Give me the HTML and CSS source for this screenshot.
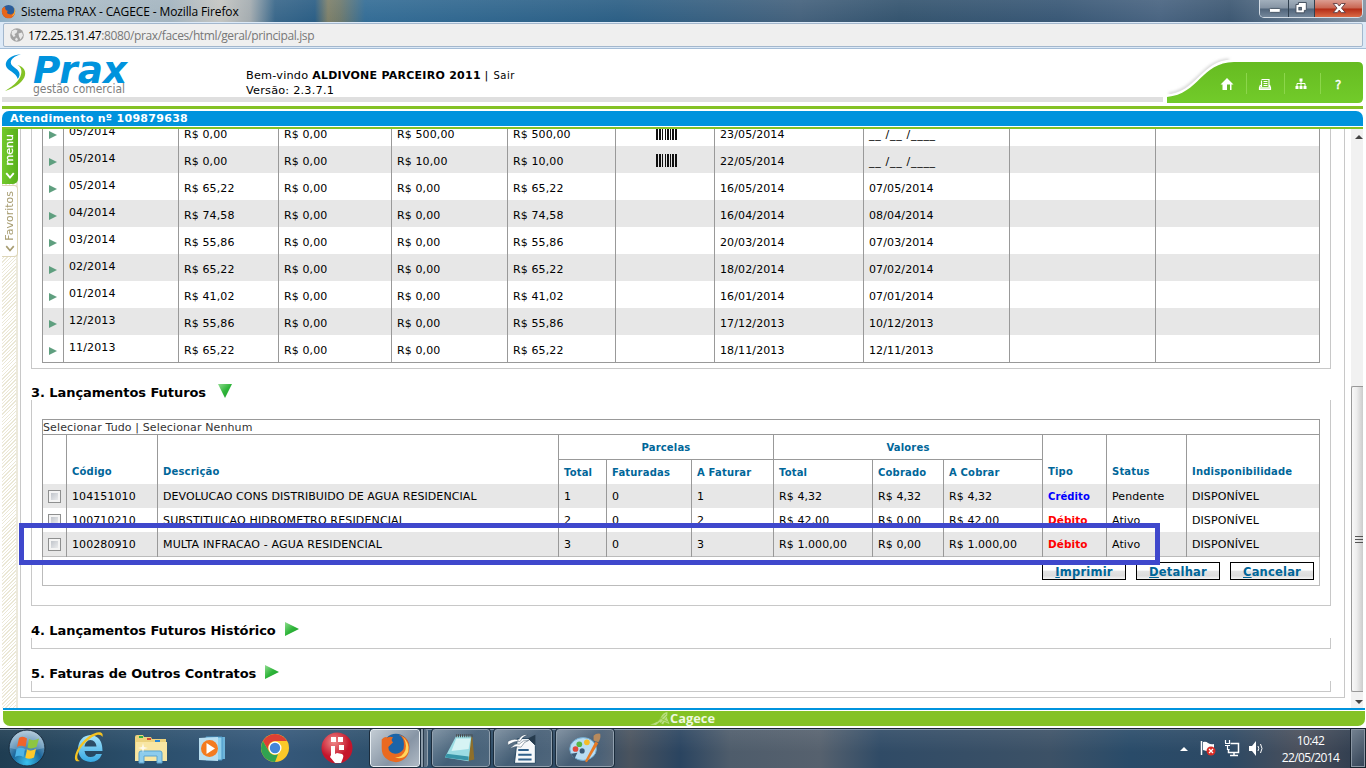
FILE: index.html
```html
<!DOCTYPE html>
<html lang="pt-BR">
<head>
<meta charset="utf-8">
<title>Sistema PRAX - CAGECE</title>
<link rel="stylesheet" href="styles.css">
</head>
<body>
<div class="titlebar">
  <svg class="fx-mini" viewBox="0 0 16 16"><circle cx="8" cy="8" r="7" fill="#2a5c9a"/><path d="M1 5C0 12 4 15.500 8.500 15.300C13 15 15.700 11 15 6C14 10 11.500 11.500 9 11C6 10.500 6 8 7.500 7.500C5 7 4 5 4.500 3C3 3 2.500 4 1 5Z" fill="#e8661b"/><path d="M13 3C15 6 15 10 11.500 13C15 12 16.500 7 13 3Z" fill="#ffc63b"/></svg>
  <span class="wintitle">Sistema PRAX - CAGECE - Mozilla Firefox</span>
  <div class="winctl">
    <div class="wc"><svg viewBox="0 0 28 17"><rect x="9.500" y="8.500" width="11" height="4" rx="1" fill="#fff" stroke="#4a5868"/></svg></div>
    <div class="wc"><svg viewBox="0 0 26 17"><path d="M9.500 2.500h8v8h-2v2.500h-8.500v-8.500h2.500z" fill="#fff" stroke="#44505f"/><rect x="10" y="7.500" width="2.500" height="2.500" fill="#66788b" stroke="#44505f"/></svg></div>
    <div class="wc close"><svg viewBox="0 0 46 17"><path d="M18 3.500h4l2 2.500 2-2.500h4l-3.800 4.500 3.800 4.500h-4l-2-2.500-2 2.500h-4l3.800-4.500z" fill="#fff" stroke="#5e3b40" stroke-width=".9"/></svg></div>
  </div>
</div>
<div class="urlbar"><div class="urlbox">
  <svg class="globe" viewBox="0 0 14 14"><circle cx="7" cy="7" r="6.800" fill="#a3a3a3"/><path d="M2 3L5 1.500 7.500 2.500 6.500 5 4.500 6 5.500 8 3.500 9 1.500 6ZM8.500 5.500L12 4.500 13 7.500 10.500 11.500 9 8.500ZM6 9.500L8 11 7 13 5 12Z" fill="#e9e9e9"/></svg>
  <span class="url"><b>172.25.131.47</b>:8080/prax/faces/html/geral/principal.jsp</span>
</div></div>

<header class="head">
  <div class="head-main">
    <svg class="logo" viewBox="0 0 132 48">
      <path d="M21 5.300C11 6 4.500 11.500 6 17C7.500 22 16 23 17.800 30C21.500 25 19 21.500 14.500 18.500C8 14.500 10 8.500 21 5.300Z" fill="#0093dd"/>
      <path d="M17.500 16C23 19 22.500 26 17.500 32C14 36.500 9.500 39 5 42C13 39.500 21 35 24.300 28.500C27 22.500 23.500 17.500 17.500 16Z" fill="#84c225"/>
      <text x="33" y="34" class="brand" textLength="94" lengthAdjust="spacingAndGlyphs">Prax</text>
      <text x="33" y="44" class="tagline" textLength="92" lengthAdjust="spacingAndGlyphs">gestão comercial</text>
    </svg>
    <div class="welcome"><div>Bem-vindo <b>ALDIVONE PARCEIRO 2011</b> | <small>Sair</small></div><div>Versão: 2.3.7.1</div></div>
    <svg class="tools" viewBox="0 0 200 47">
      <defs><linearGradient id="tg" x1="0" y1="0" x2="0" y2="1"><stop offset="0" stop-color="#66bb21"/><stop offset="1" stop-color="#72cb2a"/></linearGradient><filter id="soft" x="-20%" y="-20%" width="140%" height="140%"><feGaussianBlur stdDeviation="1.500"/></filter></defs>
      <path d="M6 38C34 34 40 5 66 4" fill="none" stroke="#ccc" stroke-width="2.500" filter="url(#soft)"/>
      <path d="M3 40C36 38 38 6 69 5H100" fill="none" stroke="#fff" stroke-width="3"/>
      <path d="M4 41C36 38 38 6.500 71 6H195Q200 6 200 11V42Q200 47 195 47H4Z" fill="url(#tg)"/>
      <path d="M83.500 17V38M121.500 17V38M157.500 17V38" stroke="#8cd64b"/>
      <path d="M64 22L70.500 28.500H68.500V34H59.500V28.500H57.500Z" fill="#fff"/><path d="M64 28.500h3V34h-3z" fill="#67b928"/>
      <g stroke="#fff" fill="none"><path d="M98.500 24.500V31M98.500 23.500h7.500v7.500M100.500 25.500h4M100.500 27.500h4M100.500 29.500h4M97.500 29l-1 2.500v2h11v-2l-1-2.500" stroke-width="1.200"/><path d="M96.500 32h11" stroke-width="1.500"/></g>
      <path d="M136.500 22.500h3v3h-3zM132.500 30h3v3h-3zM136.500 30h3v3h-3zM140.500 30h3v3h-3z" fill="#fff"/><path d="M138 25V30M134 30V27.500H142V30" fill="none" stroke="#fff"/>
      <text x="172" y="33" class="help">?</text>
    </svg>
  </div>
  <div class="greyline"></div>
  <div class="greenline"></div>
  <div class="bluebar">Atendimento nº 109879638</div>
  <div class="greenline thin"></div>
</header>

<main class="main">
  <aside class="side">
    <div class="tab tab-menu"><span>menu</span><svg viewBox="0 0 8 8"><path d="M1 2.500L4 6 7 2.500" fill="none" stroke="#fff" stroke-width="1.500"/></svg></div>
    <div class="tab tab-fav"><span>Favoritos</span><svg viewBox="0 0 8 8"><path d="M1 2.500L4 6 7 2.500" fill="none" stroke="#a79c70" stroke-width="1.300"/></svg></div>
  </aside>
  <div class="content">
    <section class="panel first">
      <div class="bills">
        <div class="brow"><i></i><span>05/2014</span><span>R$ 0,00</span><span>R$ 0,00</span><span>R$ 500,00</span><span>R$ 500,00</span><em><svg class="bar" viewBox="0 0 21 13"><use href="#bars"/></svg></em><span>23/05/2014</span><span class="blank">__ /__ /____</span><span></span><span></span></div>
        <div class="brow"><i></i><span>05/2014</span><span>R$ 0,00</span><span>R$ 0,00</span><span>R$ 10,00</span><span>R$ 10,00</span><em><svg class="bar" viewBox="0 0 21 13"><g id="bars" fill="#111"><path d="M0 0h2v13h-2zM3 0h2v13h-2zM6 0h1v13h-1zM9 0h1v13h-1zM11 0h2v13h-2zM14 0h1v13h-1zM16 0h2v13h-2zM19 0h2v13h-2z"/></g></svg></em><span>22/05/2014</span><span class="blank">__ /__ /____</span><span></span><span></span></div>
        <div class="brow"><i></i><span>05/2014</span><span>R$ 65,22</span><span>R$ 0,00</span><span>R$ 0,00</span><span>R$ 65,22</span><em></em><span>16/05/2014</span><span>07/05/2014</span><span></span><span></span></div>
        <div class="brow"><i></i><span>04/2014</span><span>R$ 74,58</span><span>R$ 0,00</span><span>R$ 0,00</span><span>R$ 74,58</span><em></em><span>16/04/2014</span><span>08/04/2014</span><span></span><span></span></div>
        <div class="brow"><i></i><span>03/2014</span><span>R$ 55,86</span><span>R$ 0,00</span><span>R$ 0,00</span><span>R$ 55,86</span><em></em><span>20/03/2014</span><span>07/03/2014</span><span></span><span></span></div>
        <div class="brow"><i></i><span>02/2014</span><span>R$ 65,22</span><span>R$ 0,00</span><span>R$ 0,00</span><span>R$ 65,22</span><em></em><span>18/02/2014</span><span>07/02/2014</span><span></span><span></span></div>
        <div class="brow"><i></i><span>01/2014</span><span>R$ 41,02</span><span>R$ 0,00</span><span>R$ 0,00</span><span>R$ 41,02</span><em></em><span>16/01/2014</span><span>07/01/2014</span><span></span><span></span></div>
        <div class="brow"><i></i><span>12/2013</span><span>R$ 55,86</span><span>R$ 0,00</span><span>R$ 0,00</span><span>R$ 55,86</span><em></em><span>17/12/2013</span><span>10/12/2013</span><span></span><span></span></div>
        <div class="brow"><i></i><span>11/2013</span><span>R$ 65,22</span><span>R$ 0,00</span><span>R$ 0,00</span><span>R$ 65,22</span><em></em><span>18/11/2013</span><span>12/11/2013</span><span></span><span></span></div>
      </div>
    </section>
    <h2 class="h3"><span>3. Lançamentos Futuros</span><svg class="tri" viewBox="0 0 14 14"><defs><linearGradient id="gr" x1="0" y1="0" x2="1" y2="1"><stop offset="0" stop-color="#8fdc8f"/><stop offset=".5" stop-color="#2fb53a"/><stop offset="1" stop-color="#1d9a2a"/></linearGradient></defs><path d="M0 0H14L7 14Z" fill="url(#gr)"/></svg></h2>
    <section class="panel second">
      <div class="launch">
        <div class="sel">Selecionar Tudo | Selecionar Nenhum</div>
        <div class="lhead lgrid">
          <div class="tall">&nbsp;</div><div class="tall">Código</div><div class="tall">Descrição</div>
          <div class="grp g1">Parcelas</div><div class="grp g2">Valores</div>
          <div class="tall t10">Tipo</div><div class="tall t11">Status</div><div class="tall t12">Indisponibilidade</div>
          <div class="sub s1">Total</div><div class="sub">Faturadas</div><div class="sub">A Faturar</div><div class="sub">Total</div><div class="sub">Cobrado</div><div class="sub">A Cobrar</div>
        </div>
        <div class="lrow lgrid"><span><b class="ck"></b></span><span>104151010</span><span>DEVOLUCAO CONS DISTRIBUIDO DE AGUA RESIDENCIAL</span><span>1</span><span>0</span><span>1</span><span>R$ 4,32</span><span>R$ 4,32</span><span>R$ 4,32</span><span class="cred">Crédito</span><span>Pendente</span><span>DISPONÍVEL</span></div>
        <div class="lrow lgrid"><span><b class="ck"></b></span><span>100710210</span><span class="subst">SUBSTITUICAO HIDROMETRO RESIDENCIAL</span><span>2</span><span>0</span><span>2</span><span>R$ 42,00</span><span>R$ 0,00</span><span>R$ 42,00</span><span class="deb">Débito</span><span>Ativo</span><span>DISPONÍVEL</span></div>
        <div class="lrow lgrid"><span><b class="ck"></b></span><span>100280910</span><span class="subst">MULTA INFRACAO - AGUA RESIDENCIAL</span><span>3</span><span>0</span><span>3</span><span>R$ 1.000,00</span><span>R$ 0,00</span><span>R$ 1.000,00</span><span class="deb">Débito</span><span>Ativo</span><span>DISPONÍVEL</span></div>
        <div class="foot"><button><u>I</u>mprimir</button><button><u>D</u>etalhar</button><button><u>C</u>ancelar</button></div>
      </div>
    </section>
    <h2 class="h4"><span>4. Lançamentos Futuros Histórico</span><svg class="tri" viewBox="0 0 14 14"><path d="M0 0L14 7 0 14Z" fill="url(#gr)"/></svg></h2>
    <section class="panel empty"></section>
    <h2 class="h5"><span>5. Faturas de Outros Contratos</span><svg class="tri" viewBox="0 0 14 14"><path d="M0 0L14 7 0 14Z" fill="url(#gr)"/></svg></h2>
    <section class="panel empty"></section>
    <div class="highlight"></div>
  </div>
  <div class="scroll">
    <div class="sbtn"><svg viewBox="0 0 12 16"><path d="M4 10h8L8 6z" fill="#444"/></svg></div>
    <div class="gap"></div>
    <div class="thumb"><svg viewBox="0 0 8 9"><path d="M0 1.500h8M0 4.500h8M0 7.500h8" stroke="#555"/></svg></div>
    <div class="sbtn end"><svg viewBox="0 0 12 14"><path d="M4 8h8L8 12z" fill="#444"/></svg></div>
  </div>
</main>

<footer class="pagefoot"><div class="blueline"></div><div class="greenfoot">
  <svg viewBox="0 0 70 15"><path d="M0 13.500Q8 12 11 6Q13 1.500 17.500 1L17 7 19.500 13 14.500 11 13 13.500 9.500 11 6 14Z" fill="#b9de80"/><path d="M7 11L16 3M11 12L17 5M10 7L18 11" stroke="#84c225" stroke-width=".7"/><text x="20" y="12" class="cag" textLength="45" lengthAdjust="spacingAndGlyphs">Cagece</text></svg>
</div></footer>

<div class="taskbar">
  <svg class="ic" viewBox="0 0 54 40"><defs><radialGradient id="orb" cx=".5" cy=".9" r=".9"><stop offset="0" stop-color="#38c3f0"/><stop offset=".45" stop-color="#1c679c"/><stop offset="1" stop-color="#a9c2d4"/></radialGradient></defs><circle cx="27" cy="19" r="18" fill="url(#orb)" stroke="#1a2c3c"/><path d="M10 19A17 17 0 0 1 44 19Q27 24 10 19Z" fill="#fff" opacity=".22"/><path d="M19 9Q23 6.500 27 9.500L25.500 18Q21 15.500 17 18Z" fill="#f0642a"/><path d="M29 10Q33 12.500 39 9.500L36.500 18Q31 20.500 27.500 18.500Z" fill="#8dc642"/><path d="M16.500 20Q21 17.500 25 20L23.500 28Q19 25.500 15 28Z" fill="#4cb4e8"/><path d="M27 20.500Q31 22.500 36 20L34 28.500Q29 31 25.300 28.700Z" fill="#fdc92c"/></svg>
  <svg class="ic w70" viewBox="54 0 70 40"><defs><linearGradient id="ie" x1="0" y1="0" x2="0" y2="1"><stop offset="0" stop-color="#a7e4fb"/><stop offset="1" stop-color="#35a9e4"/></linearGradient></defs><path d="M102.500 22H84.500Q85.500 28 90.500 28Q95 28 96 25H102Q99 33 90.500 33Q78.500 32 78 19.500Q79 7 90.500 6Q102.500 7 102.500 22ZM96.500 17.500Q95.500 11 90.500 11Q85.500 11.500 84.500 17.500Z" fill="url(#ie)"/><path d="M80 32C70 35 76 17 88 8C97 1.500 104 2 102.500 8C100 3.500 94 6 87 12C79 19 74 30 80 32Z" fill="#f5c321"/></svg>
  <svg class="ic w62" viewBox="124 0 62 40"><path d="M135 8Q135 6 137 6H143L144 8H151L152 10H166V32H135Z" fill="#ecd27d"/><path d="M136 13H167V32H135Z" fill="#f8e6a3"/><path d="M139 7h4v2h-4z" fill="#2eae46"/><path d="M147 9h4v2h-4z" fill="#d44735"/><path d="M155 11h5v2h-5z" fill="#2a86d2"/><path d="M139 34V24Q139 22 141 22H160Q162 22 162 24V34H157V27H144V34Z" fill="#8dcced" stroke="#5aa3cf"/><path d="M143 14l1 4 4 1-4 1-1 4-1-4-4-1 4-1z" fill="#fff" opacity=".8"/></svg>
  <svg class="ic w62" viewBox="186 0 62 40"><path d="M206 8H225V30H206Z" fill="#6db4da"/><path d="M206 8H222V31H206Z" fill="#8fd0ec" stroke="#4a97c7"/><path d="M199 9L218 8V32L199 31Z" fill="#b9def0"/><circle cx="209.500" cy="19.500" r="8.500" fill="#f47b20"/><path d="M206.500 14L215 19.500 206.500 25Z" fill="#fff"/></svg>
  <svg class="ic w62" viewBox="248 0 62 40"><circle cx="275" cy="19" r="14" fill="#fcc929"/><path d="M262.900 12A14 14 0 0 1 287.100 12H275A7 7 0 0 0 269 22.500Z" fill="#de4034"/><path d="M262.900 12L269 22.500A7 7 0 0 0 278 25.300L275 33A14 14 0 0 1 262.900 12Z" fill="#31a350"/><circle cx="275" cy="19" r="6.500" fill="#fff"/><circle cx="275" cy="19" r="5.200" fill="#4286d8"/></svg>
  <svg class="ic w60" viewBox="310 0 60 40"><defs><radialGradient id="rd" cx=".4" cy=".3"><stop offset="0" stop-color="#f08a8a"/><stop offset="1" stop-color="#c5152b"/></radialGradient></defs><circle cx="337" cy="19" r="15.500" fill="url(#rd)"/><path d="M331 8h5v5h-5zM338 8h5v5h-5zM339 16h5v5h-5zM331 17h4v8l2-1 5 1q2 1 1 4l-2 5h-6l-5-6 1-2z" fill="#fff"/></svg>
  <div class="tb act"><svg viewBox="0 0 50 40"><circle cx="26" cy="18" r="14" fill="#1c64a8"/><path d="M11 10Q14 6 17 8Q20 6 23 8Q20 11 23 13L18 18Q18 24 25 25Q31 25 34 20Q36 8 29 5Q41 8 40 20Q39 32 26 34Q11 32 11 19Z" fill="#ea6a20"/><path d="M32 6Q38 12 36 21Q33 29 25 29Q35 32 39 23Q41 13 32 6Z" fill="#ffd65c"/></svg></div><div class="stack"></div>
  <div class="tb"><svg viewBox="0 0 58 40"><path d="M24 6L41 7L43 31L35 33Z" fill="#8e6f2b"/><path d="M24 6H40L37 33L12 29Z" fill="#9bdce3"/><path d="M24 9H39L37 20L19 22Z" fill="#d6f3f4"/><path d="M14 25L37 28V32L12 29Z" fill="#3795a8"/><path d="M24 6H42" stroke="#444" stroke-width="3" stroke-dasharray="1 1"/></svg></div>
  <div class="tb"><svg viewBox="0 0 58 40"><path d="M23 9H35L42 16V35H20Z" fill="#f5f8fa" stroke="#24445f"/><path d="M34 9L42 16V5Z" fill="#263b4d"/><path d="M24 21H35M24 26H38M24 31H38" stroke="#2f608b" stroke-width="2"/><path d="M13 12Q21 8 24 11Q27 4 34 5Q28 7 26 12Q20 11 13 16ZM15 20Q21 13 25 15Q29 10 35 11Q30 12 27 18Q20 16 15 20Z" fill="#fff" stroke="#334b60" stroke-width=".5"/></svg></div>
  <div class="tb"><svg viewBox="0 0 58 40"><ellipse cx="27" cy="20" rx="14" ry="12" fill="#b9ddf3" stroke="#6fabd1"/><path d="M14 25l7-1-3 6z" fill="#3d5a76"/><circle cx="26" cy="22" r="2.700" fill="#3b5a77"/><circle cx="19" cy="20" r="3" fill="#df493b"/><circle cx="23" cy="15" r="3" fill="#57b544"/><circle cx="31" cy="13" r="3" fill="#f6bd28"/><path d="M40 12L43 14 31 34 29 33Z" fill="#e77a25"/><path d="M38 6Q41 3 45 4Q46 9 43 13L38 11Z" fill="#b78a5d"/></svg></div>
  <div class="tray">
    <svg viewBox="1176 0 94 40"><path d="M1180 22h8l-4-4z" fill="#fff"/>
    <path d="M1201.500 12V26" stroke="#fff" stroke-width="1.500"/><path d="M1203 13Q1206 12 1208 14Q1211 16 1214 15V23Q1208 23 1203 21Z" fill="#fff"/><circle cx="1211" cy="22" r="4.500" fill="#d92c25"/><path d="M1209 20l4 4m0-4l-4 4" stroke="#fff" stroke-width="1.300"/>
    <path d="M1230.500 14.500H1238.500V23.500H1228.500V20M1230 26.500h8M1234 24v2" fill="none" stroke="#fff" stroke-width="1.500"/><path d="M1225.500 11v3M1229.500 11v3M1225 14.500h5M1225 16.500h5M1227.500 16v4.500h2" fill="none" stroke="#fff" stroke-width="1.200"/>
    <path d="M1249 17h3l4-5v15l-4-5h-3z" fill="#fff"/><path d="M1258 17q1.500 2.500 0 5M1260.500 15q3 4.500 0 9" fill="none" stroke="#fff"/></svg>
    <div class="clock"><span>10:42</span><span>22/05/2014</span></div>
    <div class="peek"></div>
  </div>
</div>
</body>
</html>
```
FILE: styles.css
```css
* { box-sizing: border-box; }
body { margin: 0; width: 1366px; height: 768px; overflow: hidden; display: flex; flex-direction: column; background: #fff; color: #000; font: 11px "DejaVu Sans", sans-serif; }
svg { display: block; }

/* browser window */
.titlebar { height: 22px; display: flex; align-items: center; padding-right: 3px; background: linear-gradient(rgba(255,255,255,.08), transparent), linear-gradient(90deg, #8fb0c8 0, #aebfca 30px, #a3b4bf 170px, #c4c5c2 220px, #a4acb0 250px, #39678a 275px, #2b5e85 315px, #7e8069 328px, #6f7a6d 340px, #346d96 365px, #2c5f85 620px, #44617c 800px, #34546f 900px, #395876 1060px, #496481 1160px, #3d5873 1230px, #8494a4 1366px); }
.fx-mini { width: 15px; height: 15px; margin: 0 5px 0 1px; }
.wintitle { font: 12px "Open Sans", sans-serif; flex: 1; letter-spacing: -.12px; }
.winctl { display: flex; align-self: flex-start; height: 18px; width: 104px; border: 1px solid #d3dce5; border-top: 0; border-radius: 0 0 5px 5px; overflow: hidden; }
.wc { width: 29px; background: linear-gradient(#a2afbc 0, #8493a3 48%, #50647a 52%, #74879b); border-right: 1px solid #30404f; }
.wc:nth-child(2) { width: 27px; }
.wc.close { width: 47px; border: 0; background: linear-gradient(#dc9d91 0, #c96551 48%, #b32c16 52%, #da6a45); }
.urlbar { height: 27px; padding: 1px 3px 0; background: #dce9f7; border-bottom: 1px solid #a5bdd6; }
.urlbox { height: 24px; display: flex; align-items: center; gap: 4px; padding-left: 6px; border: 1px solid #a3b7cd; border-radius: 2px; background: #efefef; }
.globe { width: 14px; height: 14px; }
.url { font: 12px "Open Sans", sans-serif; letter-spacing: -.37px; color: #777; }
.url b { font-weight: 400; color: #000; }

/* application header */
.head { height: 80px; padding: 0 3px 0 2px; }
.head-main { height: 48px; display: flex; }
.logo { width: 132px; height: 48px; margin-left: -2px; overflow: visible; }
.brand { font: italic bold 37px "DejaVu Sans", sans-serif; fill: #0093dd; }
.tagline { font: 12px "DejaVu Sans", sans-serif; fill: #808080; }
.welcome { margin: 19px auto 0 114px; line-height: 15px; font-size: 11.300px; letter-spacing: .2px; }
.welcome b { font-size: 11px; letter-spacing: .26px; }
.welcome small { font-size: 10px; letter-spacing: .5px; margin-left: 1px; }
.tools { width: 200px; height: 47px; margin-top: 7px; flex: none; }
.help { font: 12px "DejaVu Sans", sans-serif; fill: #fff; stroke: #fff; stroke-width: .4px; }
.greyline { height: 5px; width: 1161px; background: #dfdfdf; }
.greenline { height: 3px; margin-top: 4px; background: #84c225; }
.bluebar { height: 15px; margin-top: 2px; padding-left: 8px; border-radius: 7px 7px 0 0; background: #0093dd; color: #fff; font-weight: bold; line-height: 16px; letter-spacing: .3px; }
.greenline.thin { height: 2px; margin-top: 1px; }

/* body */
.main { height: 579px; display: flex; overflow: hidden; }
.side { width: 16px; margin: 0 2px; border-right: 2px solid #ece9dc; background: repeating-linear-gradient(135deg, #fff 0 1.500px, #ebe8d6 1.500px 2.500px); }
.tab { width: 16px; display: flex; flex-direction: column; align-items: center; justify-content: space-between; }
.tab span { writing-mode: vertical-rl; transform: rotate(180deg); line-height: 14px; }
.tab svg { width: 10px; height: 10px; }
.tab-menu { height: 55px; padding: 5px 0 4px; background: linear-gradient(90deg, #72c92b, #58b01b); border-radius: 0 0 5px 0; color: #fff; }
.tab-menu span { -webkit-text-stroke: .3px #fff; }
.tab-fav { height: 72px; margin-top: 1px; padding: 5px 0 3px; background: #fff; border: 1px solid #ddd5b8; border-left: 0; border-radius: 0 4px 4px 0; color: #a79c70; }
.content { position: relative; width: 1325px; height: 569px; border: 1px solid #c8c8c8; border-top: 0; padding: 0 13px 0 10px; }
.panel { width: 1300px; border: 1px solid #c8c8c8; border-top: 0; }
.first { height: 240px; padding: 0 10px; overflow: hidden; }
.bills { margin-top: -10px; border-bottom: 1px solid #999; }
.brow { height: 27px; display: grid; grid-template-columns: 21px 115px 100px 113px 116px 108px 99px 149px 146px 146px 165px; line-height: 31px; letter-spacing: .12px; overflow: hidden; }
.brow:nth-child(even), .lrow:nth-child(odd) { background: #e7e7e7; }
.brow > * { border-left: 1px solid #999; padding-left: 5px; height: 27px; white-space: nowrap; }
.brow > :last-child, .lrow > :last-child, .lhead > .t12 { border-right: 1px solid #999; }
.brow > :nth-child(2) { line-height: 25px; }
.brow > .blank { letter-spacing: .7px; }
.brow i::before { content: ""; display: block; margin: 12px 0 0 1px; width: 0; border-left: 8px solid #5f9f7f; border-top: 4px solid transparent; border-bottom: 4px solid transparent; }
.brow em { padding: 8px 0 0 40px; }
.bar { width: 21px; height: 13px; }
h2 { margin: 0; font-size: 13px; line-height: 17px; letter-spacing: -.06px; display: flex; }
.h3 { height: 31px; padding-top: 15px; }
.h4, .h5 { height: 32px; padding-top: 16px; }
.tri { width: 14px; height: 14px; margin-left: 9px; }
.h3 .tri { margin-left: 12px; }
.second { height: 206px; padding: 19px 10px 0; }
.sel { height: 15px; border: 1px solid #999; border-bottom: 0; line-height: 15px; color: #333; letter-spacing: .12px; }
.lgrid { display: grid; grid-template-columns: 24px 91px 401px 48px 85px 82px 99px 71px 99px 64px 80px 134px; }
.lhead { height: 50px; grid-template-rows: 24px 25px; border-top: 1px solid #999; color: #069; font-weight: bold; font-size: 10px; letter-spacing: .18px; }
.lhead > div { border-left: 1px solid #999; white-space: nowrap; }
.tall { grid-row: 1 / 3; padding: 24px 0 0 5px; line-height: 26px; }
.grp { grid-row: 1; text-align: center; line-height: 26px; }
.g1 { grid-column: 4 / 7; }
.g2 { grid-column: 7 / 10; }
.t10 { grid-column: 10; }
.t11 { grid-column: 11; }
.t12 { grid-column: 12; }
.sub { grid-row: 2; border-top: 1px solid #999; padding-left: 5px; line-height: 25px; }
.s1 { grid-column: 4; }
.lrow { height: 24px; line-height: 25px; letter-spacing: .08px; }
.lrow > span { border-left: 1px solid #999; padding-left: 5px; white-space: nowrap; }
.lrow > .subst { letter-spacing: .15px; }
.ck { display: block; width: 13px; height: 13px; margin-top: 6px; border: 1px solid #8e8f8f; background: linear-gradient(135deg, #b5bac2, #f6f6f6); box-shadow: inset 0 0 0 2px #f4f4f4; }
.cred { color: #00f; font-weight: bold; font-size: 10px; }
.deb { color: red; font-weight: bold; font-size: 10.500px; }
.foot { height: 30px; border: 1px solid #bbb; display: flex; justify-content: flex-end; gap: 10px; padding: 5px 5px 0 0; }
.foot button { width: 84px; height: 18px; padding: 1px 0 0; border: 1px solid #000; background: linear-gradient(#fff 45%, #e4e4e4 50%, #dcdcdc 80%, #f5f5f5); color: #069; font: bold 11.500px/16px "DejaVu Sans", sans-serif; letter-spacing: .2px; }
.empty { height: 11px; }
.highlight { position: absolute; left: -2px; top: 394px; width: 1141px; height: 42px; border: 5px solid #3f48cc; }
.scroll { width: 12px; margin-left: 6px; display: flex; flex-direction: column; background: #f1f1f1; }
.sbtn { height: 16px; }
.gap { height: 242px; }
.thumb { height: 307px; border: 1px solid #999; border-right: 0; border-radius: 2px 0 0 2px; background: linear-gradient(90deg, #f8f8f8, #eee 40%, #ccc); display: flex; align-items: center; justify-content: flex-end; }
.thumb svg { width: 8px; }

.pagefoot { height: 20px; padding: 0 1px 0 3px; }
.blueline { height: 2px; background: #0093dd; }
.greenfoot { height: 15px; margin-top: 1px; background: #84c225; border-radius: 0 0 7px 7px; display: flex; padding-left: 647px; }
.greenfoot svg { width: 70px; height: 15px; }
.cag { font: bold 11.500px "Open Sans", sans-serif; fill: #eef8df; }

/* taskbar */
.taskbar { height: 40px; display: flex; border-top: 1px solid #1a2632; box-shadow: inset 0 1px #8297a8; background: linear-gradient(rgba(255,255,255,.08), transparent 60%), linear-gradient(90deg, #1f3d52 0, #2b4f6c 150px, #35587a 280px, #2d4f6b 380px, #324b64 600px, #4a535e 630px, #2a4460 680px, #4e5c6b 730px, #56616e 820px, #304b66 880px, #3c5166 1050px, #294b69 1130px, #2d4964 1230px, #4a4f5b 1300px, #2c3b4e 1366px); }
.ic { width: 54px; height: 40px; flex: none; }
.w70 { width: 70px; } .w62 { width: 62px; } .w60 { width: 60px; }
.tb { width: 58px; height: 38px; margin: 0 4px 0 0; border: 1px solid #92a1af; border-radius: 3px; outline: 1px solid #1b2c3c; outline-offset: 0; background: linear-gradient(135deg, rgba(255,255,255,.35), rgba(255,255,255,.1) 50%, rgba(255,255,255,.15)); }
.tb svg { width: 56px; height: 38px; }
.tb.act { width: 50px; margin: 0; border-color: #e6edf2; background: linear-gradient(135deg, #c3ccd4, #8795a5 60%, #b0bac5); }
.tb.act svg { width: 48px; }
.stack { width: 8px; height: 38px; margin-right: 4px; border-right: 1px solid #92a1af; background: linear-gradient(90deg, #1b2c3c 1px, #8d9caa 1px 3px, #26384a 3px 4px, #5b6f82 4px); border-radius: 0 3px 3px 0; }
.tray { margin-left: auto; display: flex; color: #fff; font: 12px "Open Sans", sans-serif; }
.tray svg { width: 94px; height: 40px; }
.clock { width: 81px; display: flex; flex-direction: column; align-items: center; line-height: 17px; padding-top: 3px; letter-spacing: -.6px; }
.peek { width: 14px; height: 38px; margin-left: 0; margin-right: 1px; border: 1px solid #8a96a3; outline: 1px solid #17222e; background: linear-gradient(135deg, #72808f, #354457); }
```
